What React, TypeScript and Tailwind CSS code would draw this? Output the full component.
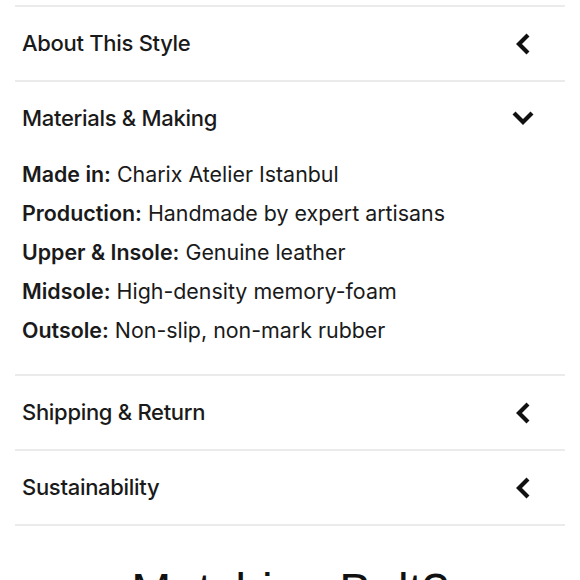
import React from "react";

const ChevronLeft = () => (
  <svg width="16" height="22" viewBox="0 0 16 22" fill="none">
    <polyline points="12.5,3.5 5,11 12.5,18.5" stroke="#111" strokeWidth="4.2" strokeLinecap="square" strokeLinejoin="miter" />
  </svg>
);

const ChevronDown = () => (
  <svg width="22" height="16" viewBox="0 0 22 16" fill="none">
    <polyline points="3.5,3.5 11,11 18.5,3.5" stroke="#111" strokeWidth="4.2" strokeLinecap="square" strokeLinejoin="miter" />
  </svg>
);

const Row = ({ title, open }: { title: string; open?: boolean }) => (
  <div className={`flex h-[73px] items-center justify-between pl-[7px] ${open ? "pr-[31px]" : "pr-[35px]"}`}>
    <span className="text-[22px] font-medium tracking-[-0.3px] text-[#1a1a1a]">{title}</span>
    {open ? <ChevronDown /> : <ChevronLeft />}
  </div>
);

const details: [string, string][] = [
  ["Made in:", "Charix Atelier Istanbul"],
  ["Production:", "Handmade by expert artisans"],
  ["Upper & Insole:", "Genuine leather"],
  ["Midsole:", "High-density memory-foam"],
  ["Outsole:", "Non-slip, non-mark rubber"],
];

export default function App() {
  return (
    <div className="w-[580px] h-[580px] overflow-hidden bg-white" style={{ fontFamily: "Inter, 'Noto Sans', sans-serif" }}>
      <div className="px-[15px] pt-[5px]">
        <div className="border-t-2 border-[#ebebeb]">
          <Row title="About This Style" />
        </div>
        <div className="border-t-2 border-[#ebebeb]">
          <Row title="Materials & Making" open />
          <div className="pl-[7px] pb-[24px] text-[21.4px] leading-[39px] text-[#1a1a1a]">
            {details.map(([k, v]) => (
              <div key={k}>
                <span className="font-semibold">{k}</span> {v}
              </div>
            ))}
          </div>
        </div>
        <div className="border-t-2 border-[#ebebeb]">
          <Row title="Shipping & Return" />
        </div>
        <div className="border-t-2 border-[#ebebeb]">
          <Row title="Sustainability" />
        </div>
        <div className="border-t-2 border-[#ebebeb]" />
      </div>
      <div
        className="mt-[41px] text-center text-[48px] leading-[48px] text-[#111]"
        style={{ fontFamily: "'Liberation Sans', Arial, sans-serif" }}
      >
        Matching Belt?
      </div>
    </div>
  );
}
